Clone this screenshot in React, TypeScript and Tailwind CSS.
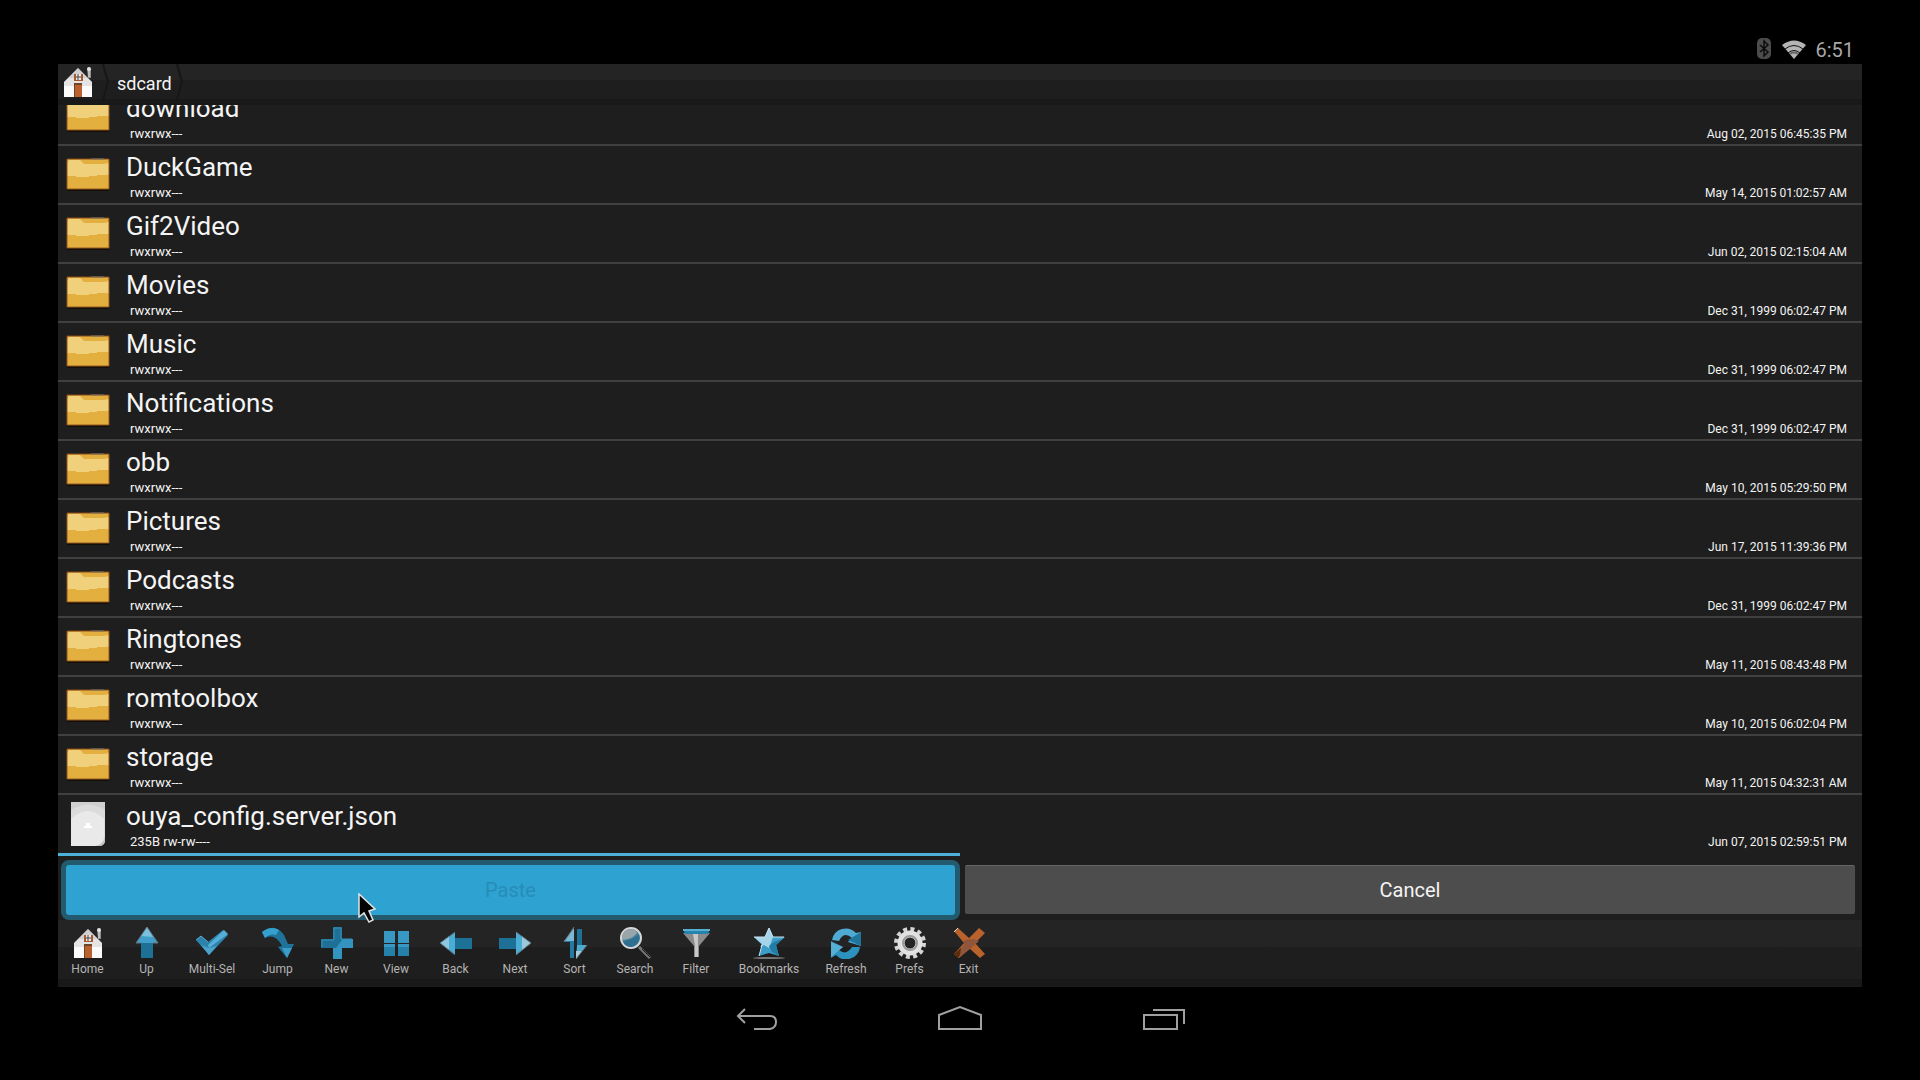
import React from 'react';

interface Entry {
  name: string;
  perms: string;
  date: string;
  kind?: 'folder' | 'file';
}

const entries: Entry[] = [
  { name: 'download', perms: 'rwxrwx---', date: 'Aug 02, 2015 06:45:35 PM' },
  { name: 'DuckGame', perms: 'rwxrwx---', date: 'May 14, 2015 01:02:57 AM' },
  { name: 'Gif2Video', perms: 'rwxrwx---', date: 'Jun 02, 2015 02:15:04 AM' },
  { name: 'Movies', perms: 'rwxrwx---', date: 'Dec 31, 1999 06:02:47 PM' },
  { name: 'Music', perms: 'rwxrwx---', date: 'Dec 31, 1999 06:02:47 PM' },
  { name: 'Notifications', perms: 'rwxrwx---', date: 'Dec 31, 1999 06:02:47 PM' },
  { name: 'obb', perms: 'rwxrwx---', date: 'May 10, 2015 05:29:50 PM' },
  { name: 'Pictures', perms: 'rwxrwx---', date: 'Jun 17, 2015 11:39:36 PM' },
  { name: 'Podcasts', perms: 'rwxrwx---', date: 'Dec 31, 1999 06:02:47 PM' },
  { name: 'Ringtones', perms: 'rwxrwx---', date: 'May 11, 2015 08:43:48 PM' },
  { name: 'romtoolbox', perms: 'rwxrwx---', date: 'May 10, 2015 06:02:04 PM' },
  { name: 'storage', perms: 'rwxrwx---', date: 'May 11, 2015 04:32:31 AM' },
  { name: 'ouya_config.server.json', perms: '235B rw-rw----', date: 'Jun 07, 2015 02:59:51 PM', kind: 'file' },
];

function HouseIcon() {
  return (
    <svg viewBox="0 0 32 32" className="size-8" aria-hidden="true">
      <path d="M25 3h4v9h-3Z" fill="#8f8f8f" />
      <path d="M27 3v8" stroke="#e8e8e8" strokeWidth="1" />
      <circle cx="27" cy="3" r="2" fill="#e4e4e4" />
      <path d="M16 2 2 16v15h28V16Z" fill="#e4e4e4" />
      <path d="M16 2 7 12h18Z" fill="#cfcfcf" />
      <path d="M2 20h28v11H2Z" fill="#fbfbfb" />
      <path d="M2 16 16 2l14 14" fill="none" stroke="#8e8e8e" strokeWidth="1" />
      <rect x="12" y="8" width="9" height="7" fill="#a9572b" />
      <rect x="14" y="8" width="5" height="6" fill="#e8e8e8" />
      <path d="M16 8v6M14 11h5" stroke="#444" strokeWidth="1" />
      <rect x="12" y="17" width="8" height="14" fill="#6d4526" />
      <rect x="13" y="19" width="7" height="12" fill="#b9622f" />
    </svg>
  );
}

function FolderIcon() {
  return (
    <svg viewBox="0 0 44 36" className="h-9 w-11" aria-hidden="true">
      <rect x="1" y="32" width="42" height="2" fill="#120e08" />
      <path d="M1 2h42v30H1Z" fill="#e3b040" />
      <path d="M1 5q0-2 3-2h10l4 4h20l5-1v12H31v1h-8v1H10v-1H1Z" fill="#f1d07c" />
      <path d="M1 5V2h42v3" fill="none" stroke="#8a4c18" strokeWidth="1" />
      <path d="M25 2h13" stroke="#7d7568" strokeWidth="1" />
      <path d="M1 4v28h42V4" fill="none" stroke="#94541a" strokeWidth="1" />
    </svg>
  );
}

function FileIcon() {
  return (
    <svg viewBox="0 0 44 46" className="h-[46px] w-11" aria-hidden="true">
      <path d="M5 1h34v38q0 6-6 6H5Z" fill="#cfcfcf" />
      <path d="M5 9q17-11 34 0v29q0 7-7 7H5Z" fill="#dbdbdb" />
      <path d="M5 18q17-16 33 0v18q-1 9-9 9H5Z" fill="#e9e9e9" />
      <path d="M39 36v4q-1 5-7 5h-3q8-1 10-9Z" fill="#c2c2c2" />
      <path d="M20 22h4v3h2v2h-8v-2h2Z" fill="#fff" />
    </svg>
  );
}

const art: Record<string, React.ReactNode> = {
  Up: (
    <>
      <path d="M10 15h12v16H10Z" fill="#1d7096" />
      <path d="M16 0 5 16h22Z" fill="#3f9fca" />
      <path d="M16 0 10 9l12 1Z" fill="#7cc0df" />
      <path d="M10 16H5L16 0l11 16h-5" fill="none" stroke="#66757c" />
    </>
  ),
  'Multi-Sel': (
    <>
      <path d="m0 13 5-4 7 6L27 3l5 5-19 20Z" fill="#2b83ad" />
      <path d="m12 18 16-15 4 4-19 14Z" fill="#54aed6" />
      <path d="m5 18 8 3 8-2-8 9Z" fill="#4ba2ca" />
      <path d="m0 13 5-4 7 6" fill="none" stroke="#5aa9cc" />
    </>
  ),
  Jump: (
    <>
      <path d="M0 5Q13-5 22 8l4 9h6l-7 14-9-11 4-1Q13 6 3 11Z" fill="#1f7299" />
      <path d="M0 5Q9-2 17 3l-3 5Q8 6 3 11Z" fill="#359fce" />
      <path d="M20 21h10l-5 10Z" fill="#3c9cc7" />
    </>
  ),
  New: (
    <>
      <path d="M12 0h9v12h11v9H21v11h-9V21H0v-9h12Z" fill="#3394bf" />
      <path d="M12 0h9v13l-6 8H0v-9h12Z" fill="#1e7096" />
      <path d="M13 1h7v11h11M1 20v-7h12V1" fill="none" stroke="#3390b8" />
    </>
  ),
  View: (
    <>
      <path d="M4 4h11v12H4Zm14 0h11v12H18Z" fill="#3898c4" />
      <path d="M4 17h11v12H4Zm14 0h11v12H18Z" fill="#2581aa" />
      <path d="M4 17h11v3H4Zm14 0h11v3H18Z" fill="#3898c4" />
    </>
  ),
  Back: (
    <>
      <path d="M13 11h19v11H13Z" fill="#1d7096" />
      <path d="M0 16 15 5v23Z" fill="#4bacd4" />
      <path d="m0 16 9-7v14Z" fill="#8ec7df" />
      <path d="M15 5 0 16l15 12" fill="none" stroke="#53666f" />
    </>
  ),
  Next: (
    <>
      <path d="M0 11h19v11H0Z" fill="#1d7096" />
      <path d="M32 16 17 5v23Z" fill="#4bacd4" />
      <path d="m32 16-9-7v14Z" fill="#9bc8da" />
      <path d="m17 5 15 11-15 12" fill="none" stroke="#65757d" />
    </>
  ),
  Sort: (
    <>
      <path d="M15 1v30h-4V15H5Z" fill="#227ba4" />
      <path d="M15 1v13H5Z" fill="#7ab9d5" />
      <path d="M18 2h5v17h-5Z" fill="#1d7096" />
      <path d="M18 18h10L17 32Z" fill="#4eaad0" />
      <path d="M17 24h6l-6 8Z" fill="#a6cbd9" />
      <path d="M15 0 5 15M28 18 17 32" stroke="#66757c" />
    </>
  ),
  Search: (
    <>
      <path d="m20 20 11 11" stroke="#777" strokeWidth="3" />
      <path d="m23 22 8 8" stroke="#1d1d1d" strokeWidth="1" />
      <circle cx="12" cy="11" r="10" fill="#40809c" stroke="#d7d7d7" strokeWidth="2" />
      <path d="M3 11q0-9 9-9 5 0 6 4Q14 11 9 12T3 13Z" fill="#9aa5aa" />
      <path d="M4 15q8-2 16-7 2 8-7 12Q6 20 4 15Z" fill="#2f7090" />
    </>
  ),
  Filter: (
    <>
      <path d="M3 6h27L19 19v11h-5V19Z" fill="#8b8b8b" />
      <path d="M13 7h5v23h-3V19Z" fill="#c8c8c8" />
      <path d="M3 2h27l-2 5H5Z" fill="#2683ad" />
      <path d="M3 2h27v2H3Z" fill="#57afd3" />
    </>
  ),
  Bookmarks: (
    <>
      <ellipse cx="16" cy="31" rx="16" ry="1" fill="#777" />
      <path d="m16 1 4 9h12l-9 8 3 11-10-3-10 3 3-11-8-8h11Z" fill="#3d9dc9" />
      <path d="m16 1 4 9-4 11-5-3-4 2 2-3-8-7h11Z" fill="#a6d5e9" />
      <path d="m16 19 5-4 8-3-6 6 3 11-7-4Z" fill="#217ca6" />
      <path d="M1 10h11l4-9 4 9h11M9 18 6 29" fill="none" stroke="#c9e5f0" />
    </>
  ),
  Refresh: (
    <>
      <path d="M2 13A14 14 0 0 1 26 6l5-1v14l-13-4 4-4Q14 4 9 14Z" fill="#4fabd4" />
      <path d="M18 13 31 5v14Z" fill="#1e759e" />
      <path d="M30 20A14 14 0 0 1 6 28l-5 3V14l12 6-4 3q7 6 13-3Z" fill="#2d91bd" />
      <path d="m1 15 12 5-12 10Z" fill="#56afd5" />
    </>
  ),
  Prefs: (
    <>
      <circle cx="16" cy="16" r="14" fill="none" stroke="#d5d5d5" strokeWidth="4" strokeDasharray="4 3.33" />
      <circle cx="16" cy="16" r="9" fill="none" stroke="#e2e2e2" strokeWidth="7" />
      <circle cx="16" cy="16" r="7" fill="none" stroke="#999" strokeWidth="2" />
    </>
  ),
  Exit: (
    <>
      <path d="m1 4 4-3 11 10L26 1l6 5-10 10 10 11-5 4-11-10L6 31l-5-4 10-11Z" fill="#b9622c" />
      <path d="m11 13 9-1 6 2-9 8L6 31l-5-4 10-9Z" fill="#8f563b" />
      <path d="m1 27 7-6-1 7-2 3Z" fill="#5a2c0e" />
      <path d="m1 5 4-4" stroke="#d9d9d9" />
    </>
  ),
};

const tools = [
  { label: 'Home', width: 'w-[59px]' },
  { label: 'Up', width: 'w-[59px]' },
  { label: 'Multi-Sel', width: 'w-[72px]' },
  { label: 'Jump', width: 'w-[59px]' },
  { label: 'New', width: 'w-[59px]' },
  { label: 'View', width: 'w-[60px]' },
  { label: 'Back', width: 'w-[59px]' },
  { label: 'Next', width: 'w-[60px]' },
  { label: 'Sort', width: 'w-[59px]' },
  { label: 'Search', width: 'w-[62px]' },
  { label: 'Filter', width: 'w-[60px]' },
  { label: 'Bookmarks', width: 'w-[86px]' },
  { label: 'Refresh', width: 'w-[68px]' },
  { label: 'Prefs', width: 'w-[59px]' },
  { label: 'Exit', width: 'w-[59px]' },
];

function StatusBar() {
  return (
    <header className="flex h-16 shrink-0 items-end justify-end px-2 text-[#a8a8a8]">
      <svg viewBox="0 0 14 22" className="mr-2.5 mb-1 h-[22px] w-3.5" aria-label="Bluetooth">
        <rect width="14" height="21" rx="5" fill="#4c4c4c" />
        <path d="m3 7 8 7-4 4V3l4 4-8 7" fill="none" stroke="#0c0c0c" strokeWidth="1.5" />
      </svg>
      <svg viewBox="0 0 26 20" className="mr-2 mb-1 h-5 w-[26px]" aria-label="Wi-Fi">
        <path d="M1 5Q13-4 25 5L13 19Z" fill="#b4b4b4" />
        <path d="M4 9q9-7 18 0M7 13q6-5 12 0" fill="none" stroke="#111" strokeWidth="1" />
        <path d="M9 14q4-3 8 0" fill="none" stroke="#666" strokeWidth="2" />
      </svg>
      <time className="text-xl leading-7">6:51</time>
    </header>
  );
}

function Breadcrumbs() {
  return (
    <nav className="flex h-[41px] shrink-0 items-start border-b-6 border-[#191919] bg-linear-to-b from-[#242424] from-45% via-[#1e1e1e] via-45% to-[#1e1e1e]">
      <button aria-label="Home" className="pt-0.5 pl-1">
        <HouseIcon />
      </button>
      <svg viewBox="0 0 8 36" className="ml-2 h-9 w-2" aria-hidden="true">
        <path d="m1 0 5 18-5 18" fill="none" stroke="#171717" strokeWidth="2" />
      </svg>
      <a href="#sdcard" className="pt-1.5 pr-1 pl-[7px] text-lg leading-7">sdcard</a>
      <svg viewBox="0 0 8 36" className="h-9 w-2" aria-hidden="true">
        <path d="m1 0 5 18-5 18" fill="none" stroke="#171717" strokeWidth="2" />
      </svg>
    </nav>
  );
}

function Row({ entry }: { entry: Entry }) {
  return (
    <li className="flex h-[59px] shrink-0 items-center border-b-2 border-[#404040] pr-[15px] pl-2 last:h-[58px] last:border-b-0">
      {entry.kind === 'file' ? <FileIcon /> : <FolderIcon />}
      <div className="ml-4 flex flex-1 flex-col self-stretch pt-[5px]">
        <span className="text-[26px] leading-8">{entry.name}</span>
        <span className="pl-1 text-[13px] leading-5">{entry.perms}</span>
      </div>
      <time className="self-stretch pt-[37px] text-xs leading-5">{entry.date}</time>
    </li>
  );
}

export default function App() {
  return (
    <div className="flex min-h-screen flex-col bg-black px-[58px] font-[Roboto,sans-serif] text-[#f4f4f4]">
      <StatusBar />

      <main className="flex flex-col bg-[#1e1e1e]">
        <Breadcrumbs />

        {/* scrolled to the end, so the first row is cut off */}
        <ul className="flex h-[748px] flex-col justify-end overflow-hidden">
          {entries.map((e) => <Row key={e.name} entry={e} />)}
        </ul>

        {/* Clipboard bar */}
        <div className="relative grid grid-cols-2">
          <div className="h-[3px] bg-[#4db0db]" />
          <div />
          <div className="pt-1 pl-[3px]">
            <button className="block h-[60px] w-full rounded-lg border-[5px] border-[#235a6e] bg-[#2ea2d0] text-xl text-[#278db8]">Paste</button>
          </div>
          <div className="pt-[9px] pr-[7px] pl-[5px]">
            <button className="block h-[49px] w-full rounded-xs border-t border-[#666] bg-[#4d4d4d] text-xl">Cancel</button>
          </div>
          <svg viewBox="0 0 20 30" className="absolute top-10 left-[300px] h-[30px] w-5" aria-hidden="true">
            <path d="M1 1v23l5-4 5 9 4-2-4-9 6-2Z" fill="#050505" stroke="#e4e4e4" strokeWidth="1.5" />
          </svg>
        </div>

        {/* Toolbar */}
        <div className="flex h-[67px] items-start border-b-8 border-[#191919] bg-linear-to-b from-[#242424] from-45% via-[#1e1e1e] via-45% to-[#1e1e1e]">
          {tools.map(({ label, width }) => (
            <button key={label} className={`flex flex-col items-center pt-[7px] ${width}`}>
              {label === 'Home' ? <HouseIcon /> : (
                <svg viewBox="0 0 32 32" className="size-8" aria-hidden="true">{art[label]}</svg>
              )}
              <span className="text-xs leading-5 text-[#b4b4b4]">{label}</span>
            </button>
          ))}
        </div>
      </main>

      {/* System navigation */}
      <footer className="flex justify-center gap-[159px] pt-4">
        <button aria-label="Back">
          <svg viewBox="0 0 44 32" className="h-8 w-11" fill="none" stroke="#a0a0a0" strokeWidth="2">
            <path d="m11 6-7 7 7 7M4 13h32q6 0 6 6t-6 7H20" />
          </svg>
        </button>
        <button aria-label="Home">
          <svg viewBox="0 0 46 32" className="h-8 w-[46px]" fill="none" stroke="#a0a0a0" strokeWidth="2">
            <path d="M2 26V12L23 4l21 8v14Z" />
          </svg>
        </button>
        <button aria-label="Recent apps">
          <svg viewBox="0 0 44 32" className="h-8 w-11" fill="none" stroke="#a0a0a0" strokeWidth="2">
            <path d="M2 12h33v14H2ZM11 7h31v14" />
          </svg>
        </button>
      </footer>
    </div>
  );
}
